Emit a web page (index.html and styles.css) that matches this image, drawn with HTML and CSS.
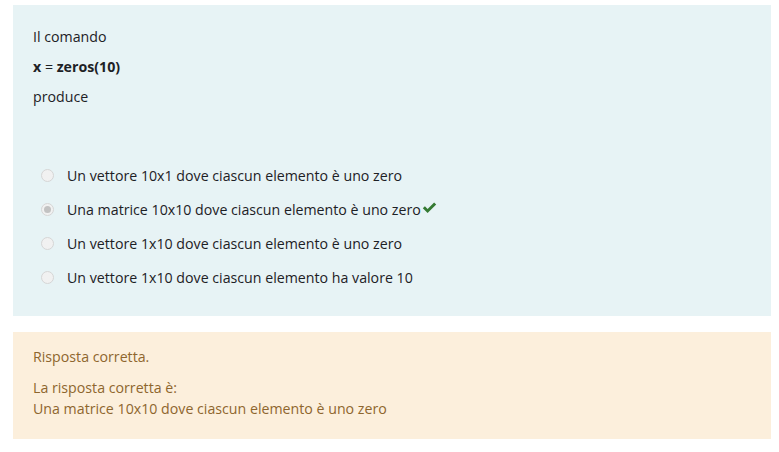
FILE: index.html
```html
<!DOCTYPE html>
<html lang="it">
<head>
<meta charset="utf-8">
<link rel="stylesheet" href="styles.css">
</head>
<body>
<div class="page">
  <div class="question">
    <div class="qtext">
      <p>Il comando</p>
      <p><strong>x</strong> = <strong>zeros(10)</strong></p>
      <p>produce</p>
    </div>
    <div class="answers">
      <div class="opt"><span class="radio"></span><span class="label">Un vettore 10x1 dove ciascun elemento è uno zero</span></div>
      <div class="opt"><span class="radio checked"></span><span class="label">Una matrice 10x10 dove ciascun elemento è uno zero</span><svg class="check" width="15" height="12" viewBox="0 0 15 12"><path d="M0.8 6.3 L2.9 4.2 L5.6 6.9 L12.1 0.4 L14.2 2.5 L5.6 11.1 Z" fill="#357a32"/></svg></div>
      <div class="opt"><span class="radio"></span><span class="label">Un vettore 1x10 dove ciascun elemento è uno zero</span></div>
      <div class="opt"><span class="radio"></span><span class="label">Un vettore 1x10 dove ciascun elemento ha valore 10</span></div>
    </div>
  </div>
  <div class="feedback">
    <p class="fb1">Risposta corretta.</p>
    <p class="fb2">La risposta corretta è:<br>Una matrice 10x10 dove ciascun elemento è uno zero</p>
  </div>
</div>
</body>
</html>
```
FILE: styles.css
```css
* { box-sizing: border-box; }
body {
  margin: 0;
  background: #fff;
  font-family: "Open Sans", "Noto Sans", sans-serif;
  font-size: 14.2px;
  color: #1d2125;
}
.page {
  padding: 5px 8px 0 13px;
}
.question {
  background: #e7f3f5;
  padding: 22px 20px 17px 20px;
  height: 311px;
}
.qtext p {
  margin: 0 0 11px 0;
  line-height: 19px;
}
.qtext strong { font-weight: 700; }
.answers {
  margin-top: 60px;
  display: flex;
  flex-direction: column;
  gap: 15px;
}
.opt {
  display: flex;
  align-items: center;
  height: 19px;
  padding-left: 8px;
}
.radio {
  width: 13px;
  height: 13px;
  border-radius: 50%;
  border: 1px solid #d6d6d6;
  background: #f1f1f1;
  margin-right: 13px;
  display: flex;
  align-items: center;
  justify-content: center;
}
.radio.checked::after {
  content: "";
  width: 7px;
  height: 7px;
  border-radius: 50%;
  background: #c2c2c2;
}
.label { line-height: 19px; }
.check { margin-left: 1px; margin-top: -3px; }
.feedback {
  margin-top: 16px;
  background: #fcefdc;
  color: #8e662e;
  padding: 14px 20px 16px 20px;
  height: 107px;
}
.feedback p { margin: 0; line-height: 21px; }
.fb1 { margin-bottom: 10px !important; }
```
